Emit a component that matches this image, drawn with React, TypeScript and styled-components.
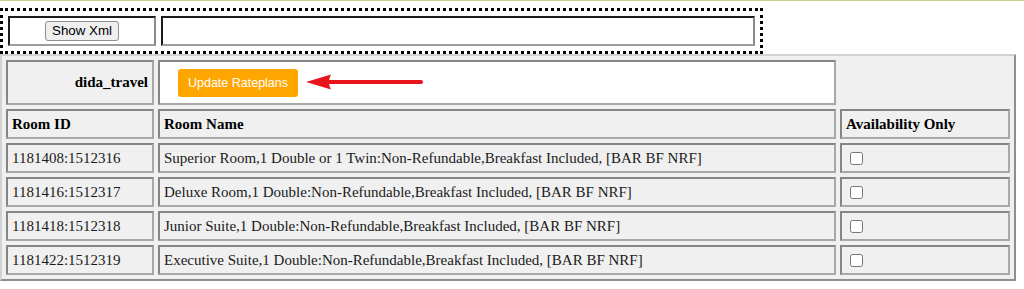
import React from "react";
import styled, { createGlobalStyle } from "styled-components";

const GlobalStyle = createGlobalStyle`
  html, body { margin: 0; padding: 0; background: #ffffff; }
  body { font-family: "Liberation Serif", "Times New Roman", serif; color: #111; }
`;

const TopRule = styled.div`
  height: 1px;
  background: #c8d08e;
`;

const Page = styled.div`
  padding-top: 7px;
`;

const XmlTable = styled.table`
  border: 3px dotted #000;
  border-spacing: 5px;
  border-collapse: separate;
  table-layout: fixed;
`;

const XmlCell = styled.td<{ $w: number; $center?: boolean }>`
  box-sizing: border-box;
  width: ${(p) => p.$w}px;
  height: 30px;
  padding: 0;
  background: #fff;
  border: 2px solid;
  border-color: #1c1c1c #8a8a8a #9c9c9c #1c1c1c;
  text-align: ${(p) => (p.$center ? "center" : "left")};
  vertical-align: middle;
`;

const GrayButton = styled.button`
  font-family: "Liberation Sans", Arial, sans-serif;
  font-size: 13.33px;
  color: #000;
  background: #efefef;
  border: 1px solid #8f8f8f;
  border-radius: 3px;
  padding: 1px 6px;
  height: 20px;
  line-height: 16px;
`;

const RateTable = styled.table`
  width: 1016px;
  border: 2px solid;
  border-color: #d2d2d2 #8e8e8e #8e8e8e #d2d2d2;
  border-spacing: 4px;
  border-collapse: separate;
  table-layout: fixed;
  background: #f0f0f0;
`;

const Cell = styled.td<{
  $w?: number;
  $h?: number;
  $align?: "left" | "right";
  $bold?: boolean;
  $white?: boolean;
  $plain?: boolean;
}>`
  box-sizing: border-box;
  ${(p) => (p.$w ? `width: ${p.$w}px;` : "")}
  height: ${(p) => p.$h ?? 30}px;
  padding: 0 4px;
  font-size: 15px;
  font-weight: ${(p) => (p.$bold ? 700 : 400)};
  color: ${(p) => (p.$bold ? "#000" : "#1a1a1a")};
  text-align: ${(p) => p.$align ?? "left"};
  vertical-align: middle;
  white-space: nowrap;
  overflow: hidden;
  background: ${(p) => (p.$white ? "#ffffff" : "#f0f0f0")};
  border: ${(p) => (p.$plain ? "none" : "2px solid")};
  border-color: #858585 #a8a8a8 #a8a8a8 #858585;
`;

const ActionRow = styled.div`
  display: flex;
  align-items: center;
  padding-left: 14px;
`;

const OrangeButton = styled.button`
  font-family: "Liberation Sans", Arial, sans-serif;
  font-size: 12.5px;
  color: #fff;
  background: #ffa500;
  border: none;
  border-radius: 3px;
  width: 120px;
  height: 28px;
  padding: 0;
`;

const Arrow = styled.svg`
  margin-left: 8px;
  margin-top: -1px;
  flex: none;
`;

const Check = styled.input`
  width: 13px;
  height: 13px;
  margin: 3px 3px 3px 4px;
  vertical-align: middle;
`;

const rooms = [
  { id: "1181408:1512316", name: "Superior Room,1 Double or 1 Twin:Non-Refundable,Breakfast Included, [BAR BF NRF]" },
  { id: "1181416:1512317", name: "Deluxe Room,1 Double:Non-Refundable,Breakfast Included, [BAR BF NRF]" },
  { id: "1181418:1512318", name: "Junior Suite,1 Double:Non-Refundable,Breakfast Included, [BAR BF NRF]" },
  { id: "1181422:1512319", name: "Executive Suite,1 Double:Non-Refundable,Breakfast Included, [BAR BF NRF]" },
];

export default function App() {
  return (
    <>
      <GlobalStyle />
      <TopRule />
      <Page>
        <XmlTable>
          <tbody>
            <tr>
              <XmlCell $w={148} $center>
                <GrayButton type="button">Show Xml</GrayButton>
              </XmlCell>
              <XmlCell $w={594} />
            </tr>
          </tbody>
        </XmlTable>
        <RateTable>
          <tbody>
            <tr>
              <Cell $w={148} $h={45} $align="right" $bold>
                dida_travel
              </Cell>
              <Cell $w={678} $h={45} $white>
                <ActionRow>
                  <OrangeButton type="button">Update Rateplans</OrangeButton>
                  <Arrow width="118" height="16" viewBox="0 0 118 16">
                    <path d="M0 8 L25 0.5 Q21 8 25 15.5 Z" fill="#e8141b" />
                    <line x1="22" y1="8" x2="115" y2="8" stroke="#e8141b" strokeWidth="4" strokeLinecap="round" />
                  </Arrow>
                </ActionRow>
              </Cell>
              <Cell $w={170} $h={45} $plain />
            </tr>
            <tr>
              <Cell $bold>Room ID</Cell>
              <Cell $bold>Room Name</Cell>
              <Cell $bold>Availability Only</Cell>
            </tr>
            {rooms.map((r) => (
              <tr key={r.id}>
                <Cell>{r.id}</Cell>
                <Cell>{r.name}</Cell>
                <Cell>
                  <Check type="checkbox" />
                </Cell>
              </tr>
            ))}
          </tbody>
        </RateTable>
      </Page>
    </>
  );
}
